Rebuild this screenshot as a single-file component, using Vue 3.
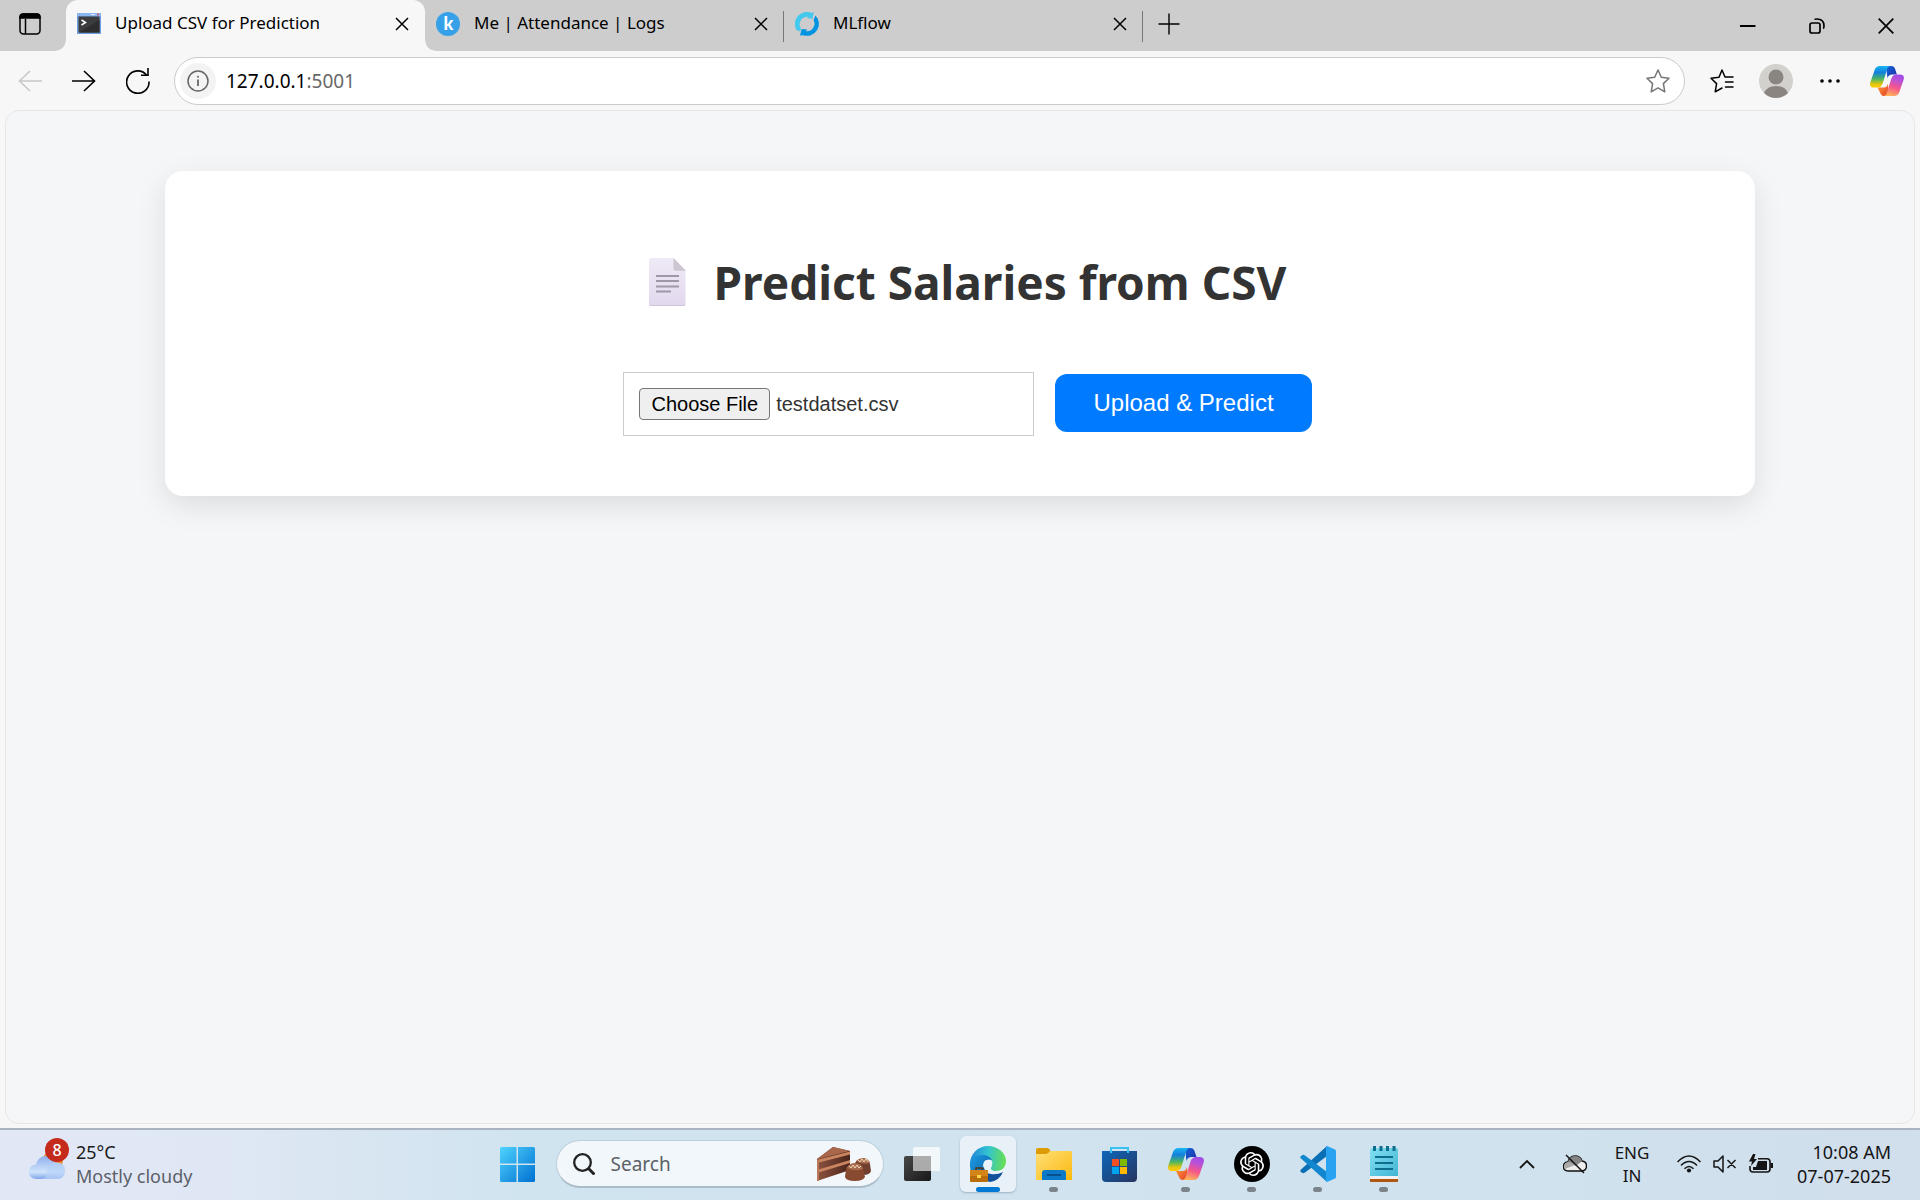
<script setup>
import { onMounted, ref } from 'vue'

const fileInput = ref(null)

const tabs = [
  { id: 'predict', title: 'Upload CSV for Prediction', active: true },
  { id: 'keka', title: 'Me | Attendance | Logs', active: false },
  { id: 'mlflow', title: 'MLflow', active: false }
]

const apps = [
  { id: 'taskview', label: 'Task View', state: '' },
  { id: 'edge', label: 'Microsoft Edge', state: 'active' },
  { id: 'folder', label: 'File Explorer', state: 'open' },
  { id: 'store', label: 'Microsoft Store', state: '' },
  { id: 'copilot', label: 'Copilot', state: 'open' },
  { id: 'chatgpt', label: 'ChatGPT', state: 'open' },
  { id: 'vscode', label: 'Visual Studio Code', state: 'open' },
  { id: 'notepad', label: 'Notepad', state: 'open' }
]

onMounted(() => {
  const transfer = new DataTransfer()
  transfer.items.add(new File([''], 'testdatset.csv', { type: 'text/csv' }))
  fileInput.value.files = transfer.files
})
</script>

<template>
  <div class="screen">
    <svg class="defs" aria-hidden="true">
      <defs>
        <linearGradient id="cp-a" x1="0" y1="0" x2="0" y2="1">
          <stop offset="0" stop-color="#18b6f0" /><stop offset=".3" stop-color="#1380dd" />
          <stop offset=".6" stop-color="#4bb563" /><stop offset=".85" stop-color="#e9c70b" /><stop offset="1" stop-color="#ffc800" />
        </linearGradient>
        <linearGradient id="cp-b" x1=".7" y1="0" x2=".4" y2="1">
          <stop offset="0" stop-color="#a24be8" /><stop offset=".25" stop-color="#b852d8" />
          <stop offset=".6" stop-color="#f4578a" /><stop offset="1" stop-color="#ffb15a" />
        </linearGradient>
        <linearGradient id="cp-c" x1="0" y1="0" x2="1" y2="1">
          <stop offset="0" stop-color="#1464d8" /><stop offset="1" stop-color="#1d2fa8" />
        </linearGradient>
        <linearGradient id="cp-d" x1="0" y1="0" x2="1" y2="1">
          <stop offset="0" stop-color="#ffa030" /><stop offset="1" stop-color="#e33b2e" />
        </linearGradient>
        <symbol id="copilot" viewBox="0 0 36 36">
          <path fill="url(#cp-c)" d="M17 2h5.500q3 0 4 3l2 6h-5q-4 0-5 4z" />
          <path fill="url(#cp-d)" d="M8 25h7q3 0 4-4l1 13h-5q-3 0-4-3z" />
          <path fill="url(#cp-a)" d="M10.500 2H22q-3 0-4 4l-4.500 14.500Q12 25 8 25H4.500Q-1 25 .3 19.500L5 6q1.500-4 5.500-4z" />
          <path fill="url(#cp-b)" d="M25.500 34H14q3 0 4-4l4.500-14.500Q24 11 28 11h3.500q5.500 0 4.200 5.500L31 30q-1.500 4-5.500 4z" />
        </symbol>
        <linearGradient id="win" x1="0" y1="0" x2="1" y2="1">
          <stop offset="0" stop-color="#4fd3ff" /><stop offset="1" stop-color="#0070d0" />
        </linearGradient>
        <linearGradient id="cloud" x1="0" y1="0" x2="0" y2="1">
          <stop offset="0" stop-color="#8fb0ee" /><stop offset=".7" stop-color="#cfe3fb" /><stop offset="1" stop-color="#7fa6ea" />
        </linearGradient>
        <linearGradient id="edge-top" x1="0" y1=".5" x2="1" y2=".6">
          <stop offset="0" stop-color="#2486d8" /><stop offset=".45" stop-color="#31c3d2" /><stop offset="1" stop-color="#6be04c" />
        </linearGradient>
        <linearGradient id="edge-mid" x1="0" y1="0" x2="1" y2="1">
          <stop offset="0" stop-color="#1b9de2" /><stop offset="1" stop-color="#0c59a4" />
        </linearGradient>
        <linearGradient id="fold" x1="0" y1="0" x2="1" y2="1">
          <stop offset="0" stop-color="#ffdf78" /><stop offset="1" stop-color="#fbb90f" />
        </linearGradient>
        <linearGradient id="bag" x1="0" y1="0" x2="1" y2="1">
          <stop offset="0" stop-color="#0d68bb" /><stop offset="1" stop-color="#27345f" />
        </linearGradient>
        <linearGradient id="dark" x1="0" y1="0" x2="1" y2="1">
          <stop offset="0" stop-color="#484848" /><stop offset="1" stop-color="#181818" />
        </linearGradient>
        <linearGradient id="brown" x1="0" y1="0" x2="1" y2="0">
          <stop offset="0" stop-color="#8d5440" /><stop offset="1" stop-color="#4a241b" />
        </linearGradient>
        <linearGradient id="paper" x1="0" y1="0" x2="0" y2="1">
          <stop offset="0" stop-color="#efeaf6" /><stop offset="1" stop-color="#e2d8ee" />
        </linearGradient>
        <linearGradient id="note" x1="0" y1="0" x2="1" y2="1">
          <stop offset="0" stop-color="#84e0f2" /><stop offset="1" stop-color="#41b5d3" />
        </linearGradient>
      </defs>
    </svg>

    <header class="tabstrip">
      <button class="workspace" aria-label="Tab actions">
        <svg width="22" height="22" viewBox="0 0 22 22" fill="none" stroke="#000" stroke-width="1.500">
          <rect x="1" y="1" width="20" height="20" rx="3.500" /><path d="M1 5V4q0-3 3-3h14q3 0 3 3v1z" fill="#000" /><path d="M6.500 6v15" />
        </svg>
      </button>
      <div v-for="tab in tabs" :key="tab.id" class="tab" :class="{ active: tab.active }">
        <svg v-if="tab.id === 'predict'" width="24" height="24" viewBox="0 0 24 24">
          <rect y="1" width="24" height="21" fill="#6f9fe0" /><rect y="1" width="24" height="3" fill="#8cb6ef" />
          <rect x="1.500" y="4.500" width="21" height="16" fill="#3c3c3e" /><path d="M2 20.500 22.500 8v12.500z" fill="#2d2d2f" />
          <path d="m4.500 8 4 2.500-4 2.500" fill="none" stroke="#fff" stroke-width="1.500" /><circle cx="21" cy="2.600" r="1" fill="#e04b58" /><path d="M14 2.600h4" stroke="#e3edfb" />
        </svg>
        <svg v-else-if="tab.id === 'keka'" width="24" height="24" viewBox="0 0 24 24">
          <circle cx="12" cy="12" r="12" fill="#36a0e8" />
          <text x="12.500" y="18" text-anchor="middle" font-family="Lato, sans-serif" font-weight="900" font-size="18" fill="#fff">k</text>
        </svg>
        <svg v-else width="24" height="24" viewBox="0 0 24 24">
          <path fill="#43c9ed" d="M5.300 19.600 1.500 18A12 12 0 0 1 16.500.9L19 0l-1.700 6.700-5.500-.7 1.900-1.200A7.600 7.600 0 0 0 5.800 16.200z" />
          <path fill="#0194e2" d="m20.500 3.500-2 4.500a7.600 7.600 0 0 1-7.800 11.200l1.800-1.700-5.800-.6-1.700 6.500 3-.2A12 12 0 0 0 20.500 3.500z" />
        </svg>
        <span class="tab-title">{{ tab.title }}</span>
        <button class="close" :aria-label="`Close ${tab.title}`">
          <svg width="14" height="14" viewBox="0 0 14 14" stroke="#000" stroke-width="1.500"><path d="m1 1 12 12M13 1 1 13" /></svg>
        </button>
      </div>
      <button class="newtab" aria-label="New tab">
        <svg width="22" height="22" viewBox="0 0 22 22" stroke="#000" stroke-width="1.400"><path d="M11 .5v21M.5 11h21" /></svg>
      </button>
      <div class="window-controls">
        <button aria-label="Minimize"><svg width="16" height="16" viewBox="0 0 16 16" stroke="#000" stroke-width="2"><path d="M0 8h15.500" /></svg></button>
        <button aria-label="Restore">
          <svg width="16" height="16" viewBox="0 0 16 16" fill="none" stroke="#000" stroke-width="1.700"><rect x="1" y="5" width="10" height="10" rx="2" /><path d="M5.500 1.500Q6 1 8 1q7 0 7 7 0 2-.8 2.500" /></svg>
        </button>
        <button aria-label="Close window"><svg width="16" height="16" viewBox="0 0 16 16" stroke="#000" stroke-width="1.700"><path d="m.7.7 14.600 14.600M15.300.7.7 15.300" /></svg></button>
      </div>
    </header>

    <nav class="toolbar">
      <button class="tool" aria-label="Back" disabled>
        <svg width="24" height="22" viewBox="0 0 24 22" fill="none" stroke="#c8c8c8" stroke-width="1.600"><path d="M24 11H1M12 1 1.500 11 12 21" /></svg>
      </button>
      <button class="tool" aria-label="Forward">
        <svg width="24" height="22" viewBox="0 0 24 22" fill="none" stroke="#000" stroke-width="1.600"><path d="M0 11h23M12 1l10.500 10L12 21" /></svg>
      </button>
      <button class="tool" aria-label="Refresh">
        <svg width="24" height="26" viewBox="0 0 24 26" fill="none" stroke="#000" stroke-width="1.600"><path d="M23 13.500A11.200 11.200 0 1 1 20.500 7M22 0v7.300h-7" /></svg>
      </button>
      <form class="address" @submit.prevent>
        <span class="info">
          <svg width="22" height="22" viewBox="0 0 22 22" fill="none" stroke="#666" stroke-width="1.500"><circle cx="11" cy="11" r="10" /><path d="M11 9.500V16" stroke-width="1.800" /><circle cx="11" cy="6.700" r="1" fill="#666" stroke="none" /></svg>
        </span>
        <a class="url" href="#">127.0.0.1<span>:5001</span></a>
        <button type="button" class="bookmark" aria-label="Add to favorites">
          <svg width="24" height="24" viewBox="0 0 24 24" fill="none" stroke="#757575" stroke-width="1.500" stroke-linejoin="round"><path d="m12 1 3.300 7.200 7.700 1-5.600 5.400 1.400 8.200-6.800-3.900-6.800 3.900 1.400-8.200L1 9.200l7.700-1z" /></svg>
        </button>
      </form>
      <button class="tool" aria-label="Favorites">
        <svg width="24" height="24" viewBox="0 0 24 24" fill="none" stroke="#000" stroke-width="1.500" stroke-linejoin="round" stroke-linecap="round"><path d="M16 8h-1L12 1 9 8.200l-8 1 5.600 5.400-1.400 8.200L12 19M15.500 8H23M15.500 13H23M15.500 18H23" /></svg>
      </button>
      <button class="tool" aria-label="Profile">
        <svg width="34" height="34" viewBox="0 0 34 34"><circle cx="17" cy="17" r="17" fill="#d3d1ce" /><circle cx="17" cy="13" r="7.500" fill="#8b8581" /><path d="M5 29q3-7 12-7t12 7q-5 5-12 5T5 29z" fill="#8b8581" /></svg>
      </button>
      <button class="tool" aria-label="Settings and more">
        <svg width="20" height="4" viewBox="0 0 20 4"><circle cx="2" cy="2" r="1.800" /><circle cx="10" cy="2" r="1.800" /><circle cx="18" cy="2" r="1.800" /></svg>
      </button>
      <button class="tool copilot-tool" aria-label="Copilot"><svg width="34" height="34"><use href="#copilot" /></svg></button>
    </nav>

    <main class="viewport">
      <section class="card">
        <h1>
          <svg width="38" height="48" viewBox="0 0 38 48">
            <path d="M1 2q0-2 2-2h22l12.500 12.500V46q0 2-2 2H3q-2 0-2-2z" fill="url(#paper)" />
            <path d="M1 45.500V46q0 2 2 2h32.500q2 0 2-2v-.5q0 1.500-2 1.500H3q-2 0-2-1.500z" fill="#cfc5dc" /><path d="M25.500 0 38 12.800H27.500q-2 0-2-2z" fill="#cbc6cf" />
            <path d="M8 18h23M8 23h23M8 28.500h23M8 33.500h15" stroke="#9d98a5" stroke-width="1.800" />
          </svg>
          <span>Predict Salaries from CSV</span>
        </h1>
        <form class="upload" @submit.prevent>
          <input ref="fileInput" type="file" accept=".csv" aria-label="CSV file" />
          <button type="submit">Upload &amp; Predict</button>
        </form>
      </section>
    </main>

    <footer class="taskbar">
      <button class="weather">
        <span class="weather-icon">
          <svg width="36" height="36" viewBox="0 0 36 36"><circle cx="24" cy="14" r="10" fill="#ef8a25" /><path d="M8 33q-8 0-8-7t7-7.500Q9 10 17 10q7 0 9 6.500 10 0 10 8 0 8.500-9 8.500z" fill="url(#cloud)" /><path d="M18 25q1-8 9-8.500 9 0 9 8 0 8.500-9 8.500H10q10 0 8-8z" fill="#b6d2f8" opacity=".7" /></svg>
          <b>8</b>
        </span>
        <span class="weather-text">25°C<small>Mostly cloudy</small></span>
      </button>

      <div class="dock">
        <button class="app" aria-label="Start">
          <svg width="35" height="35" viewBox="0 0 35 35" fill="url(#win)"><path d="M1.500 0H16.500V16.500H0V1.500Q0 0 1.500 0zM18 0h15.500Q35 0 35 1.500v15H18zM0 18h16.500v17h-15Q0 35 0 33.500zM18 18h17v15.500q0 1.500-1.500 1.500H18z" /></svg>
        </button>
        <label class="search">
          <svg width="22" height="22" viewBox="0 0 22 22" fill="none" stroke="#222" stroke-width="2.300"><circle cx="9.500" cy="9.500" r="8.300" /><path d="m15.500 15.500 6 6" stroke-width="3" /></svg>
          <input type="text" placeholder="Search" aria-label="Search" />
          <svg width="54" height="34" viewBox="0 0 54 34">
            <path d="M0 12 16 0l17 4v19L0 34z" fill="url(#brown)" /><path d="M0 12 16 0l17 4z" fill="#a9684b" />
            <path d="M0 13 33 4.500v3L0 16zM0 23 33 13v3L0 26z" fill="#c98560" /><path d="M0 13h2v21H0z" fill="#b9785a" />
            <path d="M38 16q2-4 8-4 6 0 7 5l1 7q-1 4-8 4-5 0-6-3z" fill="#70402f" /><path d="M29 22q1-5 9-5 7 0 8 5l2 8q-2 4-10 4-9 0-10-4z" fill="#87492f" />
            <path d="M30 21q2-5 8-5 7 0 8 6-8 3-16-1zM39 14q3-3 7-3 5 0 7 5-8 2-14-2z" fill="#a96c4c" /><path d="m32 19 2 2 2-3 2 3 2-3 2 3 2-2M41 13l2 2 2-3 2 3 2-3 2 3" fill="none" stroke="#f0d8b8" />
          </svg>
        </label>
        <button v-for="app in apps" :key="app.id" class="app" :class="app.state" :aria-label="app.label">
          <svg v-if="app.id === 'taskview'" width="36" height="36" viewBox="0 0 36 36"><rect y="10" width="27" height="25" rx="2" fill="url(#dark)" /><rect x="9" y="1" width="27" height="24" rx="1.500" fill="#fff" opacity=".72" /><path d="M9 10h18v15H10q-1 0-1-1z" fill="#999" opacity=".6" /></svg>
          <svg v-else-if="app.id === 'edge'" width="36" height="36" viewBox="0 0 36 36">
            <path d="M0 18C0 8 8 0 18 0s18 7 18 15c0 7-5 10-10 10-4 0-6-2-5-4 3-4 1-8-3-8-7 0-9 11-2 18Q0 30 0 18z" fill="url(#edge-top)" />
            <path d="M0 18Q2 9 12 9q7 0 10 5-8-2-9 6-1 8 7 14Q0 38 0 18z" fill="url(#edge-mid)" />
            <path d="M14 20q0 7 7 8 6 1 12-2-4 9-13 10-8-1-9-10z" fill="#11519b" />
            <path d="M18 14q4 0 4 4 0 2-1 4-1 3 5 3.500 4 0 7-1.500l1 1q-5 3-11 2.500-9-1-9.500-9 0-4.500 4.500-4.500z" fill="#eaf2f9" />
            <rect y="24" width="18" height="12" rx="1" fill="#b86d0a" /><path d="M0 24h18v6H0z" fill="#d38418" /><path d="M6 24v-2h6v2" fill="none" stroke="#563413" stroke-width="1.500" /><path d="M7 29h4v3H7z" fill="#ffd54e" />
          </svg>
          <svg v-else-if="app.id === 'folder'" width="36" height="36" viewBox="0 0 36 36"><path d="M0 4q0-2 2-2h9q2 0 3 2l1 2-4 4H0z" fill="#dd9c05" /><path d="M0 8h10q2 0 4-3h20.500Q36 5 36 6.500V34H0z" fill="url(#fold)" /><path d="M6 34v-7q0-3 3-3h18q3 0 3 3v7z" fill="#0b78c8" /><path d="M11 29h14" stroke="#084d86" stroke-width="1.800" /></svg>
          <svg v-else-if="app.id === 'store'" width="36" height="36" viewBox="0 0 36 36"><path d="M9 8V2h17v6" fill="none" stroke="#38c2f3" stroke-width="2" /><path d="M0 5h35v27q0 4-4 4H4q-4 0-4-4z" fill="url(#bag)" /><path d="M9 7V2h17v5" fill="none" stroke="#38c2f3" stroke-width="2" /><path fill="#f25022" d="M10 13h7v7h-7z" /><path fill="#7fba00" d="M18 13h7v7h-7z" /><path fill="#00a4ef" d="M10 21h7v7h-7z" /><path fill="#ffb900" d="M18 21h7v7h-7z" /></svg>
          <svg v-else-if="app.id === 'copilot'" width="36" height="36"><use href="#copilot" /></svg>
          <svg v-else-if="app.id === 'chatgpt'" width="36" height="36" viewBox="0 0 36 36"><circle cx="18" cy="18" r="18" /><path transform="translate(6 6)" fill="#fff" d="M22.2819 9.8211a5.9847 5.9847 0 0 0-.5157-4.9108 6.0462 6.0462 0 0 0-6.5098-2.9A6.0651 6.0651 0 0 0 4.9807 4.1818a5.9847 5.9847 0 0 0-3.9977 2.9 6.0462 6.0462 0 0 0 .7427 7.0966 5.98 5.98 0 0 0 .511 4.9107 6.051 6.051 0 0 0 6.5146 2.9001A5.9847 5.9847 0 0 0 13.2599 24a6.0557 6.0557 0 0 0 5.7718-4.2058 5.9894 5.9894 0 0 0 3.9977-2.9001 6.0557 6.0557 0 0 0-.7475-7.0729zm-9.022 12.6081a4.4755 4.4755 0 0 1-2.8764-1.0408l.1419-.0804 4.7783-2.7582a.7948.7948 0 0 0 .3927-.6813v-6.7369l2.02 1.1686a.071.071 0 0 1 .038.052v5.5826a4.504 4.504 0 0 1-4.4945 4.4944zm-9.6607-4.1254a4.4708 4.4708 0 0 1-.5346-3.0137l.142.0852 4.783 2.7582a.7712.7712 0 0 0 .7806 0l5.8428-3.3685v2.3324a.0804.0804 0 0 1-.0332.0615L9.74 19.9502a4.4992 4.4992 0 0 1-6.1408-1.6464zM2.3408 7.8956a4.485 4.485 0 0 1 2.3655-1.9728V11.6a.7664.7664 0 0 0 .3879.6765l5.8144 3.3543-2.0201 1.1685a.0757.0757 0 0 1-.071 0l-4.8303-2.7865A4.504 4.504 0 0 1 2.3408 7.872zm16.5963 3.8558L13.1038 8.364 15.1192 7.2a.0757.0757 0 0 1 .071 0l4.8303 2.7913a4.4944 4.4944 0 0 1-.6765 8.1042v-5.6772a.79.79 0 0 0-.407-.667zm2.0107-3.0231l-.142-.0852-4.7735-2.7818a.7759.7759 0 0 0-.7854 0L9.409 9.2297V6.8974a.0662.0662 0 0 1 .0284-.0615l4.8303-2.7866a4.4992 4.4992 0 0 1 6.6802 4.66zM8.3065 12.863l-2.02-1.1638a.0804.0804 0 0 1-.038-.0567V6.0742a4.4992 4.4992 0 0 1 7.3757-3.4537l-.142.0805L8.704 5.459a.7948.7948 0 0 0-.3927.6813zm1.0976-2.3654l2.602-1.4998 2.6069 1.4998v2.9994l-2.5974 1.4997-2.6067-1.4997Z" /></svg>
          <svg v-else-if="app.id === 'vscode'" width="36" height="36" viewBox="0 0 36 36"><path d="M27 0 1 23.500q-1.500 1.500 0 2.500l1.500 1Q3.500 27.500 5 26.500L27 10z" fill="#0a6fb5" /><path d="M27 36 1 12.500Q-.5 11 1 10l1.500-1Q3.500 8.500 5 9.500L27 26z" fill="#1287cf" /><path d="m27 0 8 3.500q1 .5 1 1.500v26q0 1-1 1.500L27 36l-1-1V1z" fill="#27a3f1" /></svg>
          <svg v-else width="36" height="36" viewBox="0 0 36 36"><path d="M4 31h28v5H4z" fill="#b0560f" /><path d="M4 29h28v4H4z" fill="#f3f3f3" /><path d="M4 4q0-2 2-2h24q2 0 2 2v26H4z" fill="url(#note)" /><path d="M9 11h18M9 17h18M9 23h18" stroke="#0c6d8d" stroke-width="2" /><path d="M8.500 0v5M15 0v5M21.500 0v5M28 0v5" stroke="#0c6d8d" stroke-width="3" /></svg>
        </button>
      </div>

      <div class="tray">
        <button class="chevron" aria-label="Show hidden icons"><svg width="16" height="10" viewBox="0 0 16 10" fill="none" stroke="#151515" stroke-width="1.800"><path d="m1 9 7-7 7 7" /></svg></button>
        <button class="onedrive" aria-label="OneDrive">
          <svg width="24" height="20" viewBox="0 0 24 20"><path d="M5 17q-4.500 0-4.500-4.500T5 8q1.500-6 7-6t7 5q4.500.500 4.500 5T19 17z" fill="#eee" stroke="#111" stroke-width="1.400" /><path d="M5 8q1.500-6 7-6t7 5l-6 5z" fill="#858585" /><path d="M1 13q0-5 5-5l6 3-10 4z" fill="#aaa" /><path d="m3 1 18 18" stroke="#111" stroke-width="1.500" /></svg>
        </button>
        <button class="language">ENG<br />IN</button>
        <button class="status" aria-label="Network, volume and battery">
          <svg width="24" height="18" viewBox="0 0 24 18" fill="none" stroke="#151515" stroke-width="1.500"><path d="M.5 7Q12-5 23.500 7M4 10.500q8-8 16 0M7.500 13.700q4.500-4.500 9 0" /><circle cx="12" cy="15.500" r="2.100" fill="#151515" stroke="none" /></svg>
          <svg width="24" height="18" viewBox="0 0 24 18" fill="none" stroke="#151515" stroke-width="1.500" stroke-linejoin="round"><path d="M1 6h4l5-5v16l-5-5H1zM14.500 5l8 8M22.500 5l-8 8" /></svg>
          <svg width="24" height="20" viewBox="0 0 24 20"><path d="M9 4.800h9q3 0 3 3V15q0 3-3 3H4q-3 0-3-3v-3" fill="none" stroke="#151515" stroke-width="1.600" /><path d="M9 7h9v9H4v-3h3zM21.500 9H24v5h-2.500zM4 0 0 7.500h3L2 12l6-7H5l1.500-5z" fill="#151515" /></svg>
        </button>
        <button class="clock">10:08 AM<br />07-07-2025</button>
      </div>
    </footer>
  </div>
</template>

<style>
body { margin: 0; }
</style>

<style scoped>
.screen {
  min-height: 100vh;
  display: flex;
  flex-direction: column;
  background: #f7f7f7;
  color: #000;
  font-family: "Noto Sans", "Open Sans", sans-serif;
}
.screen * { box-sizing: border-box; }
svg { display: block; flex: none; }
.defs { position: absolute; width: 0; height: 0; }
button {
  display: flex;
  align-items: center;
  justify-content: center;
  flex: none;
  margin: 0;
  padding: 0;
  border: 0;
  background: none;
  color: inherit;
  font: inherit;
}

.tabstrip { display: flex; height: 51px; background: #cdcdcd; }
.workspace { width: 60px; height: 48px; margin-right: 6px; }
.tab {
  position: relative;
  display: flex;
  align-items: center;
  width: 359px;
  height: 51px;
  padding: 0 15px 3px 11px;
  gap: 14px;
  font-size: 17px;
}
.tab-title { flex: 1; line-height: 24px; padding-bottom: 2px; }
.tab .close { width: 16px; height: 24px; }
.tab.active { background: #f7f7f7; border-radius: 12px 12px 0 0; }
.tab.active::before,
.tab.active::after {
  content: "";
  position: absolute;
  bottom: 0;
  width: 10px;
  height: 10px;
}
.tab.active::before { right: 100%; background: radial-gradient(circle at 0 0, #cdcdcd 9px, #f7f7f7 10px); }
.tab.active::after { left: 100%; background: radial-gradient(circle at 100% 0, #cdcdcd 9px, #f7f7f7 10px); }
.tab:not(.active)::after {
  content: "";
  position: absolute;
  right: 0;
  top: 11px;
  width: 1px;
  height: 31px;
  background: #777;
}
.newtab { width: 52px; height: 48px; }
.window-controls { display: flex; margin-left: auto; }
.window-controls button { width: 69px; height: 51px; }

.toolbar { display: flex; align-items: center; height: 59px; padding: 0 3px; }
.tool { width: 54px; height: 48px; }
.copilot-tool { width: 60px; }
.address {
  flex: 1;
  display: flex;
  align-items: center;
  height: 48px;
  margin: 0 10px 0 9px;
  padding: 0 14px 0 5px;
  border: 1px solid #cbcbcb;
  border-radius: 24px;
  background: #fff;
}
.info { display: grid; place-items: center; width: 36px; height: 36px; border-radius: 50%; background: #f3f3f3; }
.url { flex: 1; margin-left: 10px; color: #000; font-size: 19px; text-decoration: none; }
.url span { color: #686868; }

.viewport {
  flex: 1;
  margin: 0 5px 4px;
  padding: 60px 159px;
  border: 1px solid #e5e6e7;
  border-radius: 14px;
  background: #f4f6f8;
}
.card {
  padding: 73px 50px 60px;
  border-radius: 18px;
  background: #fff;
  box-shadow: 0 10px 30px rgba(0, 0, 0, 0.1);
}
h1 {
  display: flex;
  align-items: center;
  justify-content: center;
  gap: 28px;
  margin: 0 0 52px;
  padding-left: 14px;
  color: #333;
  font-size: 46px;
  line-height: 76px;
}
.upload { display: flex; align-items: center; justify-content: center; gap: 21px; padding-left: 15px; }
.upload input {
  width: 411px;
  height: 64px;
  padding: 15px;
  border: 1px solid #ccc;
  color: #333;
  font: 20px/24px "Liberation Sans", Arial, sans-serif;
}
.upload input::file-selector-button {
  height: 32px;
  margin-right: 6px;
  padding: 0 11px;
  border: 1px solid #767676;
  border-radius: 4px;
  background: #efefef;
  color: #000;
  font: 20px/24px "Liberation Sans", Arial, sans-serif;
}
.upload button {
  height: 58px;
  margin-bottom: 2px;
  padding: 0 38px;
  border-radius: 12px;
  background: #007bff;
  color: #fff;
  font: 24px/28px "Liberation Sans", Arial, sans-serif;
}

.taskbar {
  display: grid;
  grid-template-columns: 1fr auto 1fr;
  align-items: center;
  height: 72px;
  padding: 0 19px 2px 0;
  border-top: 2px solid #a9b4c0;
  background: linear-gradient(90deg, #e2e7f6 0%, #dfe7f4 12%, #d0e4ef 27%, #d0e2ee 70%, #cfe2ed 80%, #d1deec 100%);
}
.weather { justify-self: start; gap: 11px; padding-left: 29px; text-align: left; }
.weather-icon { position: relative; }
.weather-icon b {
  position: absolute;
  top: -8px;
  left: 16px;
  width: 24px;
  height: 24px;
  border-radius: 50%;
  background: #c42b1c;
  color: #fff;
  font-size: 16px;
  font-weight: 500;
  line-height: 24px;
  text-align: center;
}
.weather-text { font-size: 18px; line-height: 24px; color: #1b1b1b; }
.weather-text small { display: block; color: #5c6068; font-size: 18px; }
.dock { display: flex; align-items: center; gap: 10px; }
.app { position: relative; width: 56px; height: 56px; border-radius: 6px; }
.app.active { background: #e9f1f8; box-shadow: 0 1px 2px rgba(80, 110, 140, 0.4); }
.app.open::after,
.app.active::after {
  content: "";
  position: absolute;
  bottom: 0;
  width: 9px;
  height: 5px;
  border-radius: 3px;
  background: #7b848b;
}
.app.active::after { width: 24px; background: #0078d4; }
.search {
  display: flex;
  align-items: center;
  width: 328px;
  height: 48px;
  padding: 0 12px 0 16px;
  border: 1px solid #bccfdb;
  border-bottom: 2px solid #abbdc9;
  border-radius: 24px;
  background: #f2f7fb;
}
.search input {
  flex: 1;
  min-width: 0;
  margin-left: 16px;
  padding: 0;
  border: 0;
  background: none;
  font: 19px/26px "Noto Sans", "Open Sans", sans-serif;
}
.search input::placeholder { color: #5c6166; opacity: 1; }
.tray { display: flex; align-items: center; justify-self: end; color: #151515; font-size: 17px; line-height: 23px; }
.chevron { width: 20px; height: 48px; }
.onedrive { width: 24px; height: 48px; margin-left: 26px; }
.language { width: 54px; margin-left: 18px; }
.status { height: 48px; margin-left: 18px; gap: 12px; }
.clock { justify-content: flex-end; margin-left: 24px; padding-right: 10px; font-size: 18px; line-height: 24px; text-align: right; }
</style>
